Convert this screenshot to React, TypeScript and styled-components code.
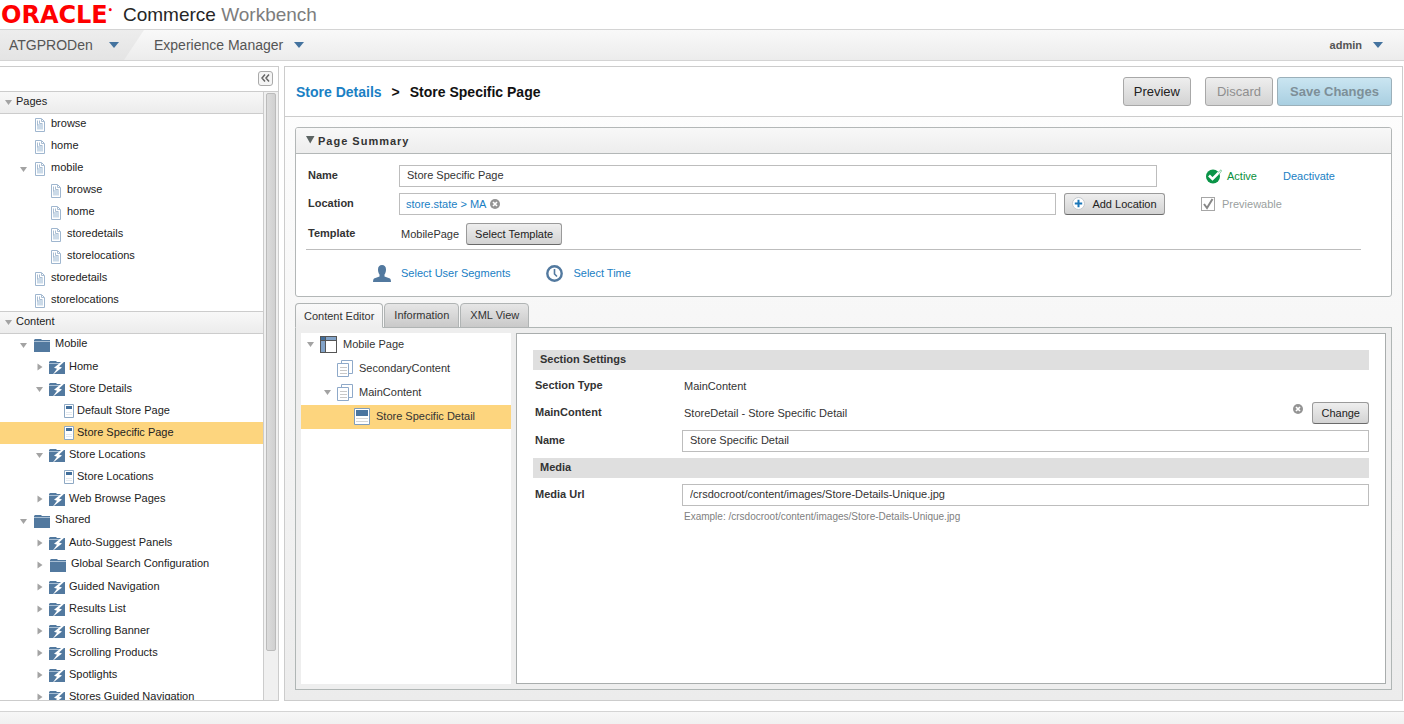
import React from 'react';
import styled, { createGlobalStyle, css } from 'styled-components';

const GlobalStyle = createGlobalStyle`
  *, *::before, *::after { box-sizing: border-box; }
  body {
    margin: 0;
    background: #fff;
    color: #333;
    font: 11px/14px "Liberation Sans", Arial, sans-serif;
  }
  button, input { font: inherit; color: inherit; }
  a { color: #1a80c4; text-decoration: none; }
  h1, h2, h3, ul { margin: 0; padding: 0; font-size: inherit; }
  ul { list-style: none; }
  svg { display: block; flex: none; }
`;

/* ---------- icons ---------- */

const CaretIcon = () => (
  <svg width="10" height="6" viewBox="0 0 10 6" aria-hidden="true">
    <path d="M0 0h10L5 6z" fill="#44739f" />
  </svg>
);

const Twisty = ({ open }: { open: boolean }) => (
  <svg width="8" height="8" viewBox="0 0 8 8" aria-hidden="true">
    <path d={open ? 'M0 2h7L3.5 7z' : 'M1.500 0.5v7L6.500 4z'} fill="#a3a3a3" />
  </svg>
);

const PanelTwisty = () => (
  <svg width="9" height="11" viewBox="0 0 9 11" aria-hidden="true">
    <path d="M0 1h8.500L4.200 8.500z" fill="#5c6463" />
  </svg>
);

const PageIcon = () => (
  <svg width="10" height="14" viewBox="0 0 10 14" aria-hidden="true">
    <path d="M.5.5h6l3 3v10h-9z" fill="#fff" stroke="#9fb6cf" />
    <path d="M2 6h6v5.500H2z" fill="#cbdae8" />
    <path d="M2.500 2.500v5M4.500 2.500v3h3M6.500 1v2.500h2.500" fill="none" stroke="#a9bdd2" />
  </svg>
);

const FolderIcon = () => (
  <svg width="16" height="14" viewBox="0 0 16 14" aria-hidden="true">
    <path d="M1 1h6l1 1h8v2H0V2z" fill="#52799f" />
    <path d="M0 4h16v10H0z" fill="#52799f" />
    <path d="M0 3.500h16" stroke="#a9bfd4" />
  </svg>
);

const FlashFolderIcon = () => (
  <svg width="17" height="15" viewBox="0 0 17 15" aria-hidden="true">
    <path d="M1 1h6l1 1h8v2H0V2z" fill="#52799f" />
    <path d="M0 4h16v10H0z" fill="#52799f" />
    <path d="M0 3.500h11" stroke="#a9bfd4" />
    <path d="M14.500 0L5 7.800l3 1L3.500 15 13 7.500l-3-1L16 1z" fill="#fff" />
  </svg>
);

const DocIcon = () => (
  <svg width="10" height="14" viewBox="0 0 10 14" aria-hidden="true">
    <path d="M.5.5h9v13h-9z" fill="#fff" stroke="#8ea9c4" />
    <path d="M2 2h6v3H2z" fill="#416e9b" />
    <path d="M2 8.500h6M2 10.500h6" stroke="#e3e9ef" />
  </svg>
);

const LayoutIcon = () => (
  <svg width="17" height="17" viewBox="0 0 17 17" aria-hidden="true">
    <path d="M0 0h17v17H0z" fill="#555" />
    <path d="M1 1h4v3H1z" fill="#416e9b" />
    <path d="M6 1h10v3H6zM1 5h4v11H1z" fill="#82a3c8" />
    <path d="M6 5h10v11H6z" fill="#fff" />
  </svg>
);

const StackIcon = () => (
  <svg width="16" height="17" viewBox="0 0 16 17" aria-hidden="true">
    <path d="M4.500.5h11v13h-11z" fill="#fff" stroke="#8ea9c9" />
    <path d="M.5 3.500h11v13H.5z" fill="#fff" stroke="#8ea9c9" />
    <path d="M3 7.500h7M3 10.500h7M3 13.500h7" stroke="#c8c8c8" />
  </svg>
);

const CardIcon = () => (
  <svg width="16" height="17" viewBox="0 0 16 17" aria-hidden="true">
    <path d="M.5.5h15v16H.5z" fill="#fff" stroke="#7f9cbb" />
    <path d="M2 2h12v6H2z" fill="#4a759f" />
    <path d="M2 10.500h12M2 13.500h12" stroke="#d5d5d5" />
  </svg>
);

const ClearIcon = () => (
  <svg width="10" height="10" viewBox="0 0 10 10" aria-hidden="true">
    <circle cx="5" cy="5" r="5" fill="#949494" />
    <path d="M3 3l4 4M7 3L3 7" stroke="#fff" strokeWidth="1.700" />
  </svg>
);

const PlusIcon = () => (
  <svg width="13" height="13" viewBox="0 0 13 13" aria-hidden="true">
    <circle cx="6.500" cy="6.500" r="6" fill="#fff" stroke="#c3c8cc" />
    <path d="M6.500 2.800v7.400M2.800 6.500h7.400" stroke="#1a76b8" strokeWidth="2" />
  </svg>
);

const UserIcon = () => (
  <svg width="18" height="17" viewBox="0 0 18 17" aria-hidden="true">
    <path
      d="M5 4.500C5 1.500 6.500 0 9 0s4 1.500 4 4.500c0 2.500-.8 4-1.500 5v2L17 13.500q1 .5 1 3.500H0q0-3 1-3.500l5.500-2v-2C5.800 8.500 5 7 5 4.500z"
      fill="#52799f"
    />
  </svg>
);

const ClockIcon = () => (
  <svg width="17" height="17" viewBox="0 0 17 17" aria-hidden="true">
    <circle cx="8.500" cy="8.500" r="7.200" fill="#fff" stroke="#52799f" strokeWidth="2.400" />
    <path d="M8.500 4v5l2.500 2.500" fill="none" stroke="#52799f" strokeWidth="1.600" />
  </svg>
);

const ActiveIcon = () => (
  <svg width="16" height="15" viewBox="0 0 16 15" aria-hidden="true">
    <circle cx="7" cy="7.500" r="7" fill="#0a9447" />
    <path d="M3 6.500l3.500 3.500L15 1.500" fill="none" stroke="#fff" strokeWidth="2.600" />
    <path d="M12 3.500L15 .8l.5 1.200L12.500 6" fill="none" stroke="#6fbf91" strokeWidth=".8" />
  </svg>
);

const CollapseIcon = () => (
  <svg width="9" height="8" viewBox="0 0 9 8" aria-hidden="true">
    <path d="M4 .5L1 4l3 3.500M8 .5L5 4l3 3.500" fill="none" stroke="#666" strokeWidth="1.500" />
  </svg>
);

/* ---------- shell ---------- */

const Shell = styled.div`
  display: flex;
  flex-direction: column;
  height: 100vh;
  overflow: hidden;
`;

const Masthead = styled.header`
  display: flex;
  flex: none;
  align-items: center;
  gap: 8px;
  height: 29px;
  padding-left: 1px;
  font-size: 19px;
  line-height: 28px;
  color: #7d7d7d;
`;

const OracleMark = styled.span`
  display: flex;
  width: 114px;
  font: bold 24px/28px "DejaVu Sans", sans-serif;
  color: #f00;
  sup {
    font-size: 8px;
    line-height: 20px;
  }
`;

const Product = styled.span`
  b {
    font-weight: normal;
    color: #262626;
  }
`;

const Bar = styled.nav`
  display: flex;
  flex: none;
  height: 32px;
  border: solid #d4d4d4;
  border-width: 1px 0;
  background: linear-gradient(#f9f9f9, #ececec);
`;

const BarButton = styled.button<{ $segment?: boolean; $end?: boolean }>`
  display: flex;
  align-items: center;
  gap: 11px;
  border: 0;
  padding: 0 10px;
  background: none;
  font-size: 14px;
  color: #555;
  ${(p) =>
    p.$segment &&
    css`
      gap: 16px;
      width: 144px;
      padding: 0 9px;
      background: linear-gradient(#ededed, #e4e4e4);
      clip-path: polygon(0 0, 100% 0, 124px 100%, 0 100%);
    `}
  ${(p) =>
    p.$end &&
    css`
      margin-left: auto;
      padding-right: 21px;
      font-size: 11px;
      font-weight: bold;
    `}
`;

const Body = styled.div`
  display: flex;
  flex: 1;
  gap: 5px;
  min-height: 0;
  padding: 5px 1px 10px 0;
`;

const Footer = styled.footer`
  flex: none;
  height: 13px;
  border-top: 1px solid #d4d4d4;
  background: linear-gradient(#f7f7f7, #f1f1f1);
`;

/* ---------- sidebar ---------- */

const Sidebar = styled.aside`
  display: flex;
  flex-direction: column;
  width: 279px;
  flex: none;
  border: solid #ccc;
  border-width: 1px 1px 1px 0;
`;

const SidebarTop = styled.div`
  display: flex;
  flex: none;
  justify-content: flex-end;
  align-items: center;
  height: 24px;
  padding: 0 5px 2px 0;
`;

const CollapseButton = styled.button`
  display: flex;
  align-items: center;
  justify-content: center;
  width: 15px;
  height: 15px;
  padding: 0;
  border: 1px solid #aaa;
  border-radius: 3px;
  background: #f5f5f5;
`;

const SidebarScroll = styled.div`
  display: flex;
  flex: 1;
  min-height: 0;
  border-top: 1px solid #ccc;
`;

const Trees = styled.div`
  flex: 1;
  overflow: hidden;
`;

const Track = styled.div`
  width: 15px;
  padding: 1px 2px;
  border-left: 1px solid #ccc;
  background: #f0f0f0;
`;

const Thumb = styled.div`
  height: 92%;
  border: 1px solid #bbb;
  border-radius: 2px;
  background: linear-gradient(90deg, #dcdcdc, #d0d0d0);
`;

const GroupHead = styled.h2`
  display: flex;
  align-items: center;
  gap: 3px;
  height: 23px;
  margin-top: -1px;
  padding: 0 0 3px 5px;
  border: solid #ccc;
  border-width: 1px 0;
  background: linear-gradient(#f8f8f8, #ececec);
  font-weight: normal;
  color: #222;
  svg {
    margin-top: 2px;
  }
`;

type Kind = 'page' | 'folder' | 'flash' | 'doc';

/* lead: from the twisty to the icon; gap: from the icon to the text; lift: space under the text */
const spacing: Record<Kind, { lead: number; gap: number; lift: number }> = {
  page: { lead: 15, gap: 6, lift: 4 },
  folder: { lead: 14, gap: 5, lift: 4 },
  flash: { lead: 13, gap: 3, lift: 2 },
  doc: { lead: 12, gap: 3, lift: 2 },
};

const icons: Record<Kind, React.ReactNode> = {
  page: <PageIcon />,
  folder: <FolderIcon />,
  flash: <FlashFolderIcon />,
  doc: <DocIcon />,
};

const TreeButton = styled.button<{ $level: number; $kind: Kind; $active?: boolean }>`
  display: flex;
  align-items: center;
  gap: ${(p) => spacing[p.$kind].gap}px;
  width: 100%;
  height: 22px;
  padding: 0 0 0 ${(p) => 20 + p.$level * 16}px;
  border: 0;
  background: ${(p) => (p.$active ? '#fdd57e' : 'none')};
  color: #222;
  text-align: left;
  white-space: nowrap;
`;

const TwistySlot = styled.span<{ $kind: Kind }>`
  display: flex;
  width: ${(p) => spacing[p.$kind].lead - spacing[p.$kind].gap}px;
`;

const TreeText = styled.span<{ $kind: Kind }>`
  padding-bottom: ${(p) => spacing[p.$kind].lift}px;
`;

interface Node {
  label: string;
  kind: Kind;
  level: number;
  open?: boolean;
  active?: boolean;
}

const pages: Node[] = [
  { label: 'browse', kind: 'page', level: 0 },
  { label: 'home', kind: 'page', level: 0 },
  { label: 'mobile', kind: 'page', level: 0, open: true },
  { label: 'browse', kind: 'page', level: 1 },
  { label: 'home', kind: 'page', level: 1 },
  { label: 'storedetails', kind: 'page', level: 1 },
  { label: 'storelocations', kind: 'page', level: 1 },
  { label: 'storedetails', kind: 'page', level: 0 },
  { label: 'storelocations', kind: 'page', level: 0 },
];

const content: Node[] = [
  { label: 'Mobile', kind: 'folder', level: 0, open: true },
  { label: 'Home', kind: 'flash', level: 1, open: false },
  { label: 'Store Details', kind: 'flash', level: 1, open: true },
  { label: 'Default Store Page', kind: 'doc', level: 2 },
  { label: 'Store Specific Page', kind: 'doc', level: 2, active: true },
  { label: 'Store Locations', kind: 'flash', level: 1, open: true },
  { label: 'Store Locations', kind: 'doc', level: 2 },
  { label: 'Web Browse Pages', kind: 'flash', level: 1, open: false },
  { label: 'Shared', kind: 'folder', level: 0, open: true },
  { label: 'Auto-Suggest Panels', kind: 'flash', level: 1, open: false },
  { label: 'Global Search Configuration', kind: 'folder', level: 1, open: false },
  { label: 'Guided Navigation', kind: 'flash', level: 1, open: false },
  { label: 'Results List', kind: 'flash', level: 1, open: false },
  { label: 'Scrolling Banner', kind: 'flash', level: 1, open: false },
  { label: 'Scrolling Products', kind: 'flash', level: 1, open: false },
  { label: 'Spotlights', kind: 'flash', level: 1, open: false },
  { label: 'Stores Guided Navigation', kind: 'flash', level: 1, open: false },
];

const Group = ({ title, nodes }: { title: string; nodes: Node[] }) => (
  <section>
    <GroupHead>
      <Twisty open />
      {title}
    </GroupHead>
    <ul>
      {nodes.map((n, i) => (
        <li key={i}>
          <TreeButton type="button" $level={n.level} $kind={n.kind} $active={n.active}>
            <TwistySlot $kind={n.kind}>{n.open !== undefined && <Twisty open={n.open} />}</TwistySlot>
            {icons[n.kind]}
            <TreeText $kind={n.kind}>{n.label}</TreeText>
          </TreeButton>
        </li>
      ))}
    </ul>
  </section>
);

/* ---------- work area ---------- */

const Work = styled.main`
  display: flex;
  flex: 1;
  flex-direction: column;
  min-width: 0;
  border: 1px solid #ccc;
  background: linear-gradient(#fefefe, #ececec);
`;

const WorkHead = styled.div`
  display: flex;
  flex: none;
  align-items: center;
  height: 50px;
  padding: 0 10px 0 11px;
  border-bottom: 1px solid #ccc;
  background: #fff;
`;

const Crumbs = styled.h1`
  display: flex;
  flex: 1;
  gap: 10px;
  font-size: 14px;
  line-height: 18px;
  color: #111;
`;

const Button = styled.button<{ $tone?: 'plain' | 'save'; $large?: boolean; $gap?: number }>`
  display: flex;
  align-items: center;
  justify-content: center;
  gap: 7px;
  height: 22px;
  margin-left: ${(p) => p.$gap ?? 0}px;
  padding: 0 8px 1px;
  border: 1px solid #9a9a9a;
  border-bottom-color: #6a6a6a;
  border-radius: 3px;
  background: linear-gradient(#eee, #d3d3d3);
  color: #222;
  white-space: nowrap;
  ${(p) =>
    p.$large &&
    css`
      min-width: 68px;
      height: 29px;
      border-color: #a8a8a8;
      padding: 0 10px;
      font-size: 13px;
    `}
  &:disabled {
    color: #8f8f8f;
  }
  ${(p) =>
    p.$tone === 'save' &&
    css`
      min-width: 115px;
      border-color: #9bb0ba;
      background: linear-gradient(#cae5f1, #a9cfe1);
      font-weight: bold;
      &:disabled {
        color: #7d8f98;
      }
    `}
`;

const WorkBody = styled.div`
  display: flex;
  flex: 1;
  flex-direction: column;
  gap: 6px;
  min-height: 0;
  padding: 10px;
`;

const Summary = styled.section`
  flex: none;
  border: 1px solid #b3b7b7;
  border-radius: 3px;
  background: #fff;
`;

const SummaryHead = styled.h2`
  display: flex;
  align-items: center;
  gap: 3px;
  height: 26px;
  padding: 0 10px;
  border-bottom: 1px solid #b3b7b7;
  border-radius: 2px 2px 0 0;
  background: linear-gradient(#f8f8f8, #ededed);
  font-size: 11px;
  letter-spacing: 1px;
  color: #333;
`;

const SummaryGrid = styled.div`
  display: grid;
  grid-template-columns: 91px 1fr 101px 218px;
  grid-template-rows: 22px 22px 26px;
  align-items: center;
  gap: 6px 0;
  padding: 11px 8px 0 12px;
`;

const FieldLabel = styled.label`
  font-weight: bold;
  padding-bottom: 2px;
`;

const TextInput = styled.input`
  width: 100%;
  height: 22px;
  padding: 0 7px 2px;
  border: 1px solid #bdbdbd;
  background: #fff;
  color: #333;
`;

const NameCell = styled.div`
  grid-column: 2 / 4;
  padding-right: 8px;
`;

const TagBox = styled.div`
  display: flex;
  align-items: center;
  gap: 4px;
  height: 22px;
  margin-right: 8px;
  padding: 0 6px 1px;
  border: 1px solid #bdbdbd;
`;

const IconButton = styled.button<{ $raised?: boolean }>`
  display: flex;
  padding: 0 0 ${(p) => (p.$raised ? 8 : 0)}px;
  border: 0;
  background: none;
`;

const StatusCell = styled.div`
  display: flex;
  align-items: center;
  gap: 5px;
  padding-left: 41px;
  color: #0a8f3c;
  a {
    padding-left: 21px;
  }
`;

const CheckLabel = styled.label`
  display: flex;
  align-items: center;
  gap: 7px;
  padding-left: 36px;
  color: #9a9fa0;
`;

const CheckBox = styled.input`
  appearance: none;
  width: 14px;
  height: 14px;
  margin: 0;
  border: 1px solid #a6a6a6;
  background: #fff
    url("data:image/svg+xml,%3Csvg xmlns='http://www.w3.org/2000/svg' viewBox='0 0 12 12'%3E%3Cpath d='M2 6l3 4L10.500 1' fill='none' stroke='%23888' stroke-width='2'/%3E%3C/svg%3E")
    center / 12px no-repeat;
`;

const TemplateCell = styled.div`
  display: flex;
  align-items: center;
  gap: 7px;
  grid-column: 2 / 5;
  padding-left: 2px;
`;

const Divider = styled.hr`
  margin: 2px 30px 0 10px;
  border: 0;
  border-top: 1px solid #bdbdbd;
`;

const Links = styled.div`
  display: flex;
  align-items: center;
  gap: 36px;
  height: 46px;
  padding-left: 77px;
`;

const IconLink = styled.a`
  display: flex;
  align-items: center;
  gap: 10px;
`;

/* ---------- tabs and editor ---------- */

const Tabbed = styled.section`
  display: flex;
  flex: 1;
  flex-direction: column;
  min-height: 0;
`;

const TabList = styled.div`
  display: flex;
  gap: 1px;
  margin-bottom: -1px;
  z-index: 1;
`;

const Tab = styled.button<{ $active?: boolean }>`
  height: 25px;
  padding: 0 9px 2px;
  border: 1px solid #b0b4b4;
  border-radius: 4px 4px 0 0;
  background: linear-gradient(#e6e6e6, #c9c9c9);
  color: #333;
  ${(p) =>
    p.$active &&
    css`
      padding: 0 8px;
      border-bottom-color: #eee;
      background: linear-gradient(#fafafa, #eee);
    `}
`;

const TabPanel = styled.div`
  display: flex;
  flex: 1;
  gap: 5px;
  min-height: 0;
  padding: 5px;
  border: 1px solid #b0b6b5;
  background: #eee;
`;

const Outline = styled.ul`
  width: 210px;
  background: #fff;
`;

const OutlineButton = styled.button<{ $indent: number; $active?: boolean }>`
  display: flex;
  align-items: center;
  gap: 6px;
  width: 100%;
  height: 24px;
  padding: 0 0 2px ${(p) => p.$indent}px;
  border: 0;
  background: ${(p) => (p.$active ? '#fdd57e' : 'none')};
  color: #333;
  white-space: nowrap;
`;

const OutlineTwisty = styled.span`
  display: flex;
  width: 7px;
`;

const Editor = styled.form`
  display: flex;
  flex: 1;
  flex-direction: column;
  gap: 6px;
  min-width: 0;
  padding: 16px;
  border: 1px solid #a9adad;
  background: #fff;
`;

const EditorHead = styled.h3`
  height: 20px;
  padding: 0 7px;
  background: #dfdfdf;
  line-height: 19px;
`;

const EditorRow = styled.div`
  display: grid;
  grid-template-columns: 147px 1fr auto;
  align-items: center;
  min-height: 20px;
  padding-left: 2px;
`;

const Value = styled.output`
  padding-left: 2px;
`;

const Actions = styled.span`
  display: flex;
  align-items: center;
  gap: 9px;
`;

const WideCell = styled.span`
  display: flex;
  grid-column: 2 / 4;
`;

const Hint = styled.small`
  margin: -2px 0 0 151px;
  font-size: 10px;
  color: #808080;
`;

export default function App() {
  return (
    <Shell>
      <GlobalStyle />
      <Masthead>
        <OracleMark>
          ORACLE<sup>•</sup>
        </OracleMark>
        <Product>
          <b>Commerce</b> Workbench
        </Product>
      </Masthead>
      <Bar>
        <BarButton type="button" $segment>
          ATGPRODen <CaretIcon />
        </BarButton>
        <BarButton type="button">
          Experience Manager <CaretIcon />
        </BarButton>
        <BarButton type="button" $end>
          admin <CaretIcon />
        </BarButton>
      </Bar>

      <Body>
        <Sidebar>
          <SidebarTop>
            <CollapseButton type="button" aria-label="Collapse">
              <CollapseIcon />
            </CollapseButton>
          </SidebarTop>
          <SidebarScroll>
            <Trees>
              <Group title="Pages" nodes={pages} />
              <Group title="Content" nodes={content} />
            </Trees>
            <Track>
              <Thumb />
            </Track>
          </SidebarScroll>
        </Sidebar>

        <Work>
          <WorkHead>
            <Crumbs>
              <a href="#store-details">Store Details</a>
              <span>&gt;</span>
              <span>Store Specific Page</span>
            </Crumbs>
            <Button type="button" $large>
              Preview
            </Button>
            <Button type="button" $large $gap={14} disabled>
              Discard
            </Button>
            <Button type="button" $large $gap={4} $tone="save" disabled>
              Save Changes
            </Button>
          </WorkHead>

          <WorkBody>
            <Summary>
              <SummaryHead>
                <PanelTwisty />
                Page Summary
              </SummaryHead>
              <SummaryGrid>
                <FieldLabel htmlFor="page-name">Name</FieldLabel>
                <NameCell>
                  <TextInput id="page-name" defaultValue="Store Specific Page" />
                </NameCell>
                <StatusCell>
                  <ActiveIcon />
                  Active
                  <a href="#deactivate">Deactivate</a>
                </StatusCell>

                <FieldLabel as="span">Location</FieldLabel>
                <TagBox>
                  <a href="#location">store.state &gt; MA</a>
                  <IconButton type="button" aria-label="Remove location">
                    <ClearIcon />
                  </IconButton>
                </TagBox>
                <Button type="button">
                  <PlusIcon />
                  Add Location
                </Button>
                <CheckLabel>
                  <CheckBox type="checkbox" defaultChecked disabled />
                  Previewable
                </CheckLabel>

                <FieldLabel as="span">Template</FieldLabel>
                <TemplateCell>
                  MobilePage
                  <Button type="button">Select Template</Button>
                </TemplateCell>
              </SummaryGrid>
              <Divider />
              <Links>
                <IconLink href="#segments">
                  <UserIcon />
                  Select User Segments
                </IconLink>
                <IconLink href="#time">
                  <ClockIcon />
                  Select Time
                </IconLink>
              </Links>
            </Summary>

            <Tabbed>
              <TabList role="tablist">
                <Tab type="button" role="tab" aria-selected $active>
                  Content Editor
                </Tab>
                <Tab type="button" role="tab">
                  Information
                </Tab>
                <Tab type="button" role="tab">
                  XML View
                </Tab>
              </TabList>
              <TabPanel role="tabpanel">
                <Outline>
                  <li>
                    <OutlineButton type="button" $indent={6}>
                      <OutlineTwisty>
                        <Twisty open />
                      </OutlineTwisty>
                      <LayoutIcon />
                      Mobile Page
                    </OutlineButton>
                  </li>
                  <li>
                    <OutlineButton type="button" $indent={23}>
                      <OutlineTwisty />
                      <StackIcon />
                      SecondaryContent
                    </OutlineButton>
                  </li>
                  <li>
                    <OutlineButton type="button" $indent={23}>
                      <OutlineTwisty>
                        <Twisty open />
                      </OutlineTwisty>
                      <StackIcon />
                      MainContent
                    </OutlineButton>
                  </li>
                  <li>
                    <OutlineButton type="button" $indent={40} $active>
                      <OutlineTwisty />
                      <CardIcon />
                      Store Specific Detail
                    </OutlineButton>
                  </li>
                </Outline>

                <Editor>
                  <EditorHead>Section Settings</EditorHead>
                  <EditorRow>
                    <FieldLabel htmlFor="section-type">Section Type</FieldLabel>
                    <Value id="section-type">MainContent</Value>
                  </EditorRow>
                  <EditorRow>
                    <FieldLabel htmlFor="main-content">MainContent</FieldLabel>
                    <Value id="main-content">StoreDetail - Store Specific Detail</Value>
                    <Actions>
                      <IconButton type="button" aria-label="Clear content" $raised>
                        <ClearIcon />
                      </IconButton>
                      <Button type="button">Change</Button>
                    </Actions>
                  </EditorRow>
                  <EditorRow>
                    <FieldLabel htmlFor="section-name">Name</FieldLabel>
                    <WideCell>
                      <TextInput id="section-name" defaultValue="Store Specific Detail" />
                    </WideCell>
                  </EditorRow>
                  <EditorHead>Media</EditorHead>
                  <EditorRow>
                    <FieldLabel htmlFor="media-url">Media Url</FieldLabel>
                    <WideCell>
                      <TextInput
                        id="media-url"
                        defaultValue="/crsdocroot/content/images/Store-Details-Unique.jpg"
                      />
                    </WideCell>
                  </EditorRow>
                  <Hint>Example: /crsdocroot/content/images/Store-Details-Unique.jpg</Hint>
                </Editor>
              </TabPanel>
            </Tabbed>
          </WorkBody>
        </Work>
      </Body>
      <Footer />
    </Shell>
  );
}
